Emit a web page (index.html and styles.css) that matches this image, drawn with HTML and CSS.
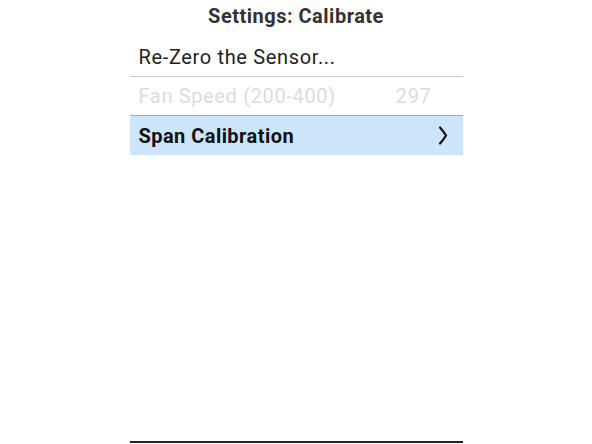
FILE: index.html
```html
<!DOCTYPE html>
<html lang="en">
<head>
  <meta charset="UTF-8">
  <title>Settings: Calibrate</title>
  <link rel="stylesheet" href="styles.css">
</head>
<body>
  <div class="screen">
    <h1 class="screen-title">Settings: Calibrate</h1>
    <ul class="menu">
      <li class="menu-item">Re-Zero the Sensor...</li>
      <li class="menu-item disabled">
        <span class="label">Fan Speed (200-400)</span>
        <span class="value">297</span>
      </li>
      <li class="menu-item selected">
        <span class="label">Span Calibration</span>
        <svg class="chevron" width="10" height="19" viewBox="0 0 10 19">
          <path d="M2 1.5 Q6 6 8 9.5 Q6 13 2 17.5" fill="none" stroke="#111" stroke-width="2.2" stroke-linecap="round"/>
        </svg>
      </li>
    </ul>
    <div class="screen-footer"></div>
  </div>
</body>
</html>
```

FILE: styles.css
```css
body {
  margin: 0;
  background-color: #fff;
  font-family: Roboto, "Liberation Sans", sans-serif;
  color: #222;
}

.screen {
  width: 333px;
  height: 444px;
  margin: 0 auto;
  display: flex;
  flex-direction: column;
}

.screen-title {
  margin: 0;
  height: 37px;
  line-height: 32px;
  font-size: 20px;
  font-weight: bold;
  letter-spacing: 0.5px;
  text-align: center;
  color: #333;
}

.menu {
  list-style: none;
  margin: 0;
  padding: 0;
}

.menu-item {
  display: flex;
  align-items: center;
  height: 39px;
  padding: 0 15px 0 9px;
  font-size: 20px;
  letter-spacing: 0.65px;
  color: #222;
  border-bottom: 1px solid #c8c8c8;
}

.menu-item .label {
  flex: 1;
}

.menu-item.disabled {
  height: 38px;
  color: #dcdcdc;
  border-bottom-color: #a8a8a8;
}

.menu-item .value {
  margin-right: 16px;
}

.menu-item.selected {
  background-color: #cce5fb;
  font-weight: bold;
  letter-spacing: 0.45px;
  color: #111;
  border-bottom: none;
}

.screen-footer {
  margin-top: auto;
  margin-bottom: 1px;
  height: 2px;
  background-color: #222;
}
```
